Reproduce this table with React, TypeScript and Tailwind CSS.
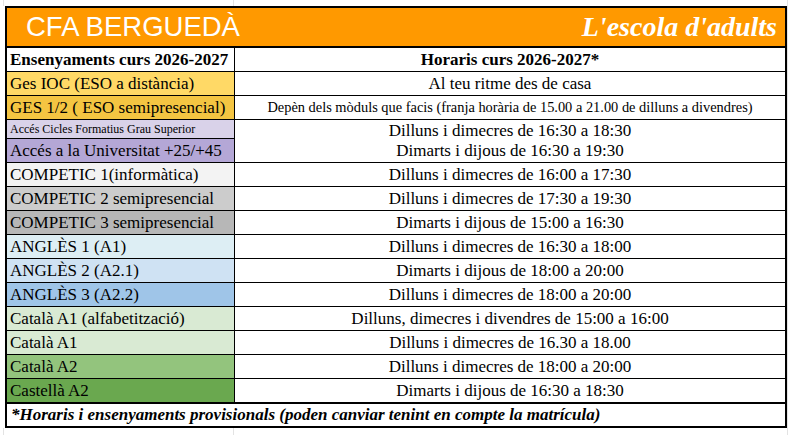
const rows = [
  { label: 'Ges IOC (ESO a distància)', bg: 'bg-[#ffd966]', time: 'Al teu ritme des de casa' },
  {
    label: 'GES 1/2 ( ESO semipresencial)',
    bg: 'bg-[#f4c542]',
    time: 'Depèn dels mòduls que facis (franja horària de 15.00 a 21.00 de dilluns a divendres)',
    small: true,
  },
];

const rowsAfter = [
  { label: 'COMPETIC 1(informàtica)', bg: 'bg-[#f3f3f3]', time: 'Dilluns i dimecres de 16:00 a 17:30' },
  { label: 'COMPETIC 2 semipresencial', bg: 'bg-[#cccccc]', time: 'Dilluns i dimecres de 17:30 a 19:30' },
  { label: 'COMPETIC 3 semipresencial', bg: 'bg-[#b7b7b7]', time: 'Dimarts i dijous de 15:00 a 16:30' },
  { label: 'ANGLÈS 1 (A1)', bg: 'bg-[#ddeef4]', time: 'Dilluns i dimecres de 16:30 a 18:00' },
  { label: 'ANGLÈS 2 (A2.1)', bg: 'bg-[#cfe2f3]', time: 'Dimarts i dijous de 18:00 a 20:00' },
  { label: 'ANGLÈS 3 (A2.2)', bg: 'bg-[#9fc5e8]', time: 'Dilluns i dimecres de 18:00 a 20:00' },
  { label: 'Català A1 (alfabetització)', bg: 'bg-[#d9ead3]', time: 'Dilluns, dimecres i divendres de 15:00 a 16:00' },
  { label: 'Català A1', bg: 'bg-[#d9ead3]', time: 'Dilluns i dimecres de 16.30 a 18.00' },
  { label: 'Català A2', bg: 'bg-[#93c47d]', time: 'Dilluns i dimecres de 18:00 a 20:00' },
  { label: 'Castellà A2', bg: 'bg-[#6aa84f]', time: 'Dimarts i dijous de 16:30 a 18:30', last: true },
];

function Row({ label, bg, time, small, last }: { label: string; bg: string; time: string; small?: boolean; last?: boolean }) {
  const h = last ? 'h-[23px]' : 'h-[24px] border-b';
  return (
    <>
      <div className={`${h} ${bg} border-r border-black pl-[3px] flex items-center text-[17px] whitespace-nowrap`}>{label}</div>
      <div className={`${h} border-black flex items-center justify-center whitespace-nowrap ${small ? 'text-[14.4px]' : 'text-[17px]'}`}>
        {time}
      </div>
    </>
  );
}

export default function App() {
  return (
    <div className="w-[793px] h-[435px] bg-white flex flex-col text-black font-['Liberation_Serif','Times_New_Roman',serif]">
      <div className="h-[6px] flex">
        <div className="w-[4px] border-r border-[#e3e3e3]" />
        <div className="w-[230px] border-r border-[#e3e3e3]" />
        <div className="w-[554px] border-r border-[#e3e3e3]" />
      </div>
      <div className="flex">
        <div className="w-[5px]" />
        <div className="w-[782px] border-2 border-black flex flex-col">
          <div className="h-[40px] bg-[#ff9900] border-b-2 border-black flex items-center justify-between pl-[19px] pr-[8px] text-white">
            <span className="text-[27.5px] leading-none font-['Liberation_Sans',Arial,sans-serif]">CFA BERGUEDÀ</span>
            <span className="text-[28px] leading-none font-bold italic">L'escola d'adults</span>
          </div>
          <div className="grid grid-cols-[228px_1fr]">
            <div className="h-[24px] border-b border-r border-black pl-[3px] flex items-center text-[17px] font-bold whitespace-nowrap">
              Ensenyaments curs 2026-2027
            </div>
            <div className="h-[24px] border-b border-black flex items-center justify-center text-[17px] font-bold">
              Horaris curs 2026-2027*
            </div>
            {rows.map((r) => (
              <Row key={r.label} {...r} />
            ))}
            <div className="h-[19px] bg-[#d9d2e9] border-b border-r border-black pl-[3px] flex items-center text-[12px] whitespace-nowrap">
              Accés Cicles Formatius Grau Superior
            </div>
            <div className="row-span-2 border-b border-black flex flex-col items-center justify-center text-[17px] leading-[20px]">
              <span>Dilluns i dimecres de 16:30 a 18:30</span>
              <span>Dimarts i dijous de 16:30 a 19:30</span>
            </div>
            <div className="h-[24px] bg-[#b4a7d6] border-b border-r border-black pl-[3px] flex items-center text-[17px] whitespace-nowrap">
              Accés a la Universitat +25/+45
            </div>
            {rowsAfter.map((r) => (
              <Row key={r.label} {...r} />
            ))}
          </div>
          <div className="h-[24px] border-t-2 border-black pl-[4px] flex items-center text-[17px] font-bold italic whitespace-nowrap">
            *Horaris i ensenyaments provisionals (poden canviar tenint en compte la matrícula)
          </div>
        </div>
        <div className="w-[1px] border-r border-[#e3e3e3]" />
      </div>
      <div className="flex-1 flex">
        <div className="w-[4px] border-r border-[#e3e3e3]" />
        <div className="w-[230px] border-r border-[#e3e3e3]" />
        <div className="w-[554px] border-r border-[#e3e3e3]" />
      </div>
    </div>
  );
}
